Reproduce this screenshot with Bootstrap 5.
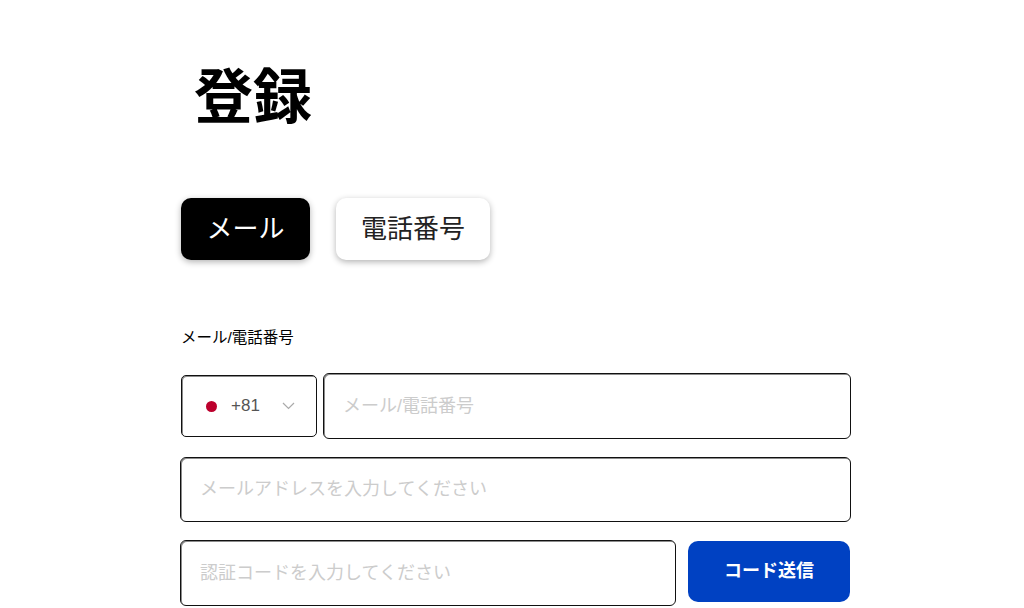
<!DOCTYPE html>
<html lang="ja">
<head>
<meta charset="utf-8">
<title>登録</title>
<link href="https://cdn.jsdelivr.net/npm/bootstrap@5.3.0/dist/css/bootstrap.min.css" rel="stylesheet">
<style>
html, body { height: 100%; overflow: hidden; }
body { font-family: "Liberation Sans", "Noto Sans CJK JP", sans-serif; color: #000; background: #fff; }
.reg-wrap { width: 671px; margin-left: 180px; padding-top: 59px; }
.reg-title { font-size: 59px; line-height: 78px; font-weight: 700; margin: 0 0 61px 14px; }
.reg-tabs { gap: 26px; margin: 0 0 67px 1px; }
.reg-tab { height: 62px; font-size: 26px; line-height: 1; border-radius: 10px; border: 0; padding: 0 25px; box-shadow: 0 2px 6px rgba(0,0,0,.3); background: #fff; color: #222; }
.reg-tab-on { background: #000; color: #fff; padding: 0 25.500px; }
.reg-label { font-size: 15.5px; line-height: 22px; margin: 0 0 24px 1px; display: block; }
.reg-field { height: 66px; border: 1px solid #111; border-radius: 6px; box-shadow: inset 1px 1px 0 rgba(0,0,0,.45); font-size: 18px; padding: 0 19px; color: #333; outline: 0; min-width: 0; }
.reg-field::placeholder { color: #ccc; opacity: 1; }
.reg-mail { height: 65px; }
.reg-line { margin-bottom: 18px; }
.reg-gap { gap: 6px; }
.reg-dial { width: 136px; height: 62px; margin-left: 1px; border: 1px solid #111; border-radius: 5px; box-shadow: inset 1px 1px 0 rgba(0,0,0,.45); font-size: 17px; color: #555; padding-left: 24px; }
.reg-dot { width: 11px; height: 11px; border-radius: 50%; background: #bc002d; margin-right: 14px; }
.reg-code { width: 162px; height: 61px; margin: 1px 1px 0 12px; border: 0; border-radius: 10px; background: #0041c2; color: #fff; font-size: 18px; font-weight: 700; }
.reg-chev { margin-left: 22px; }
</style>
</head>
<body>
<div class="reg-wrap">
  <h1 class="reg-title">登録</h1>
  <div class="d-flex reg-tabs">
    <button type="button" class="reg-tab reg-tab-on">メール</button>
    <button type="button" class="reg-tab">電話番号</button>
  </div>
  <label class="reg-label" for="f1">メール/電話番号</label>
  <div class="d-flex align-items-center reg-gap reg-line">
    <div class="reg-dial d-flex align-items-center flex-shrink-0">
      <span class="reg-dot"></span><span>+81</span>
      <svg class="reg-chev" width="13" height="8" viewBox="0 0 13 8" fill="none" stroke="#aaa" stroke-width="1.2"><path d="M1 1l5.500 5.500L12 1"/></svg>
    </div>
    <input id="f1" class="reg-field flex-grow-1" placeholder="メール/電話番号">
  </div>
  <input class="reg-field reg-mail reg-line w-100 d-block" placeholder="メールアドレスを入力してください">
  <div class="d-flex align-items-start">
    <input class="reg-field flex-grow-1" placeholder="認証コードを入力してください">
    <button type="button" class="reg-code flex-shrink-0">コード送信</button>
  </div>
</div>
<script src="https://cdn.jsdelivr.net/npm/bootstrap@5.3.0/dist/js/bootstrap.bundle.min.js"></script>
</body>
</html>
